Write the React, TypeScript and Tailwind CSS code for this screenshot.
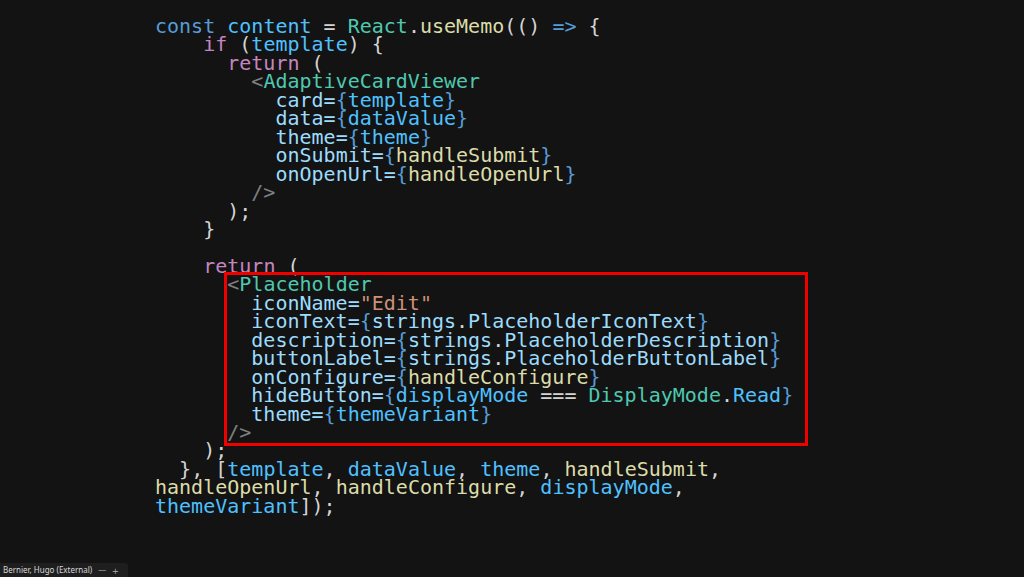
import React from "react";

type Tok = [string, string];

const C: Record<string, string> = {
  kw: "text-[#569cd6]",
  ctl: "text-[#c586c0]",
  v: "text-[#4fc1ff]",
  p: "text-[#9cdcfe]",
  fn: "text-[#dcdcaa]",
  ty: "text-[#4ec9b0]",
  s: "text-[#ce9178]",
  pu: "text-[#d4d4d4]",
  tg: "text-[#808080]",
  br: "text-[#569cd6]",
};

const lines: Tok[][] = [
  [["const", "kw"], [" ", "pu"], ["content", "v"], [" = ", "pu"], ["React", "ty"], [".", "pu"], ["useMemo", "fn"], ["(() ", "pu"], ["=>", "kw"], [" {", "pu"]],
  [["    ", "pu"], ["if", "ctl"], [" (", "pu"], ["template", "v"], [") {", "pu"]],
  [["      ", "pu"], ["return", "ctl"], [" (", "pu"]],
  [["        ", "pu"], ["<", "tg"], ["AdaptiveCardViewer", "ty"]],
  [["          ", "pu"], ["card=", "p"], ["{", "br"], ["template", "v"], ["}", "br"]],
  [["          ", "pu"], ["data=", "p"], ["{", "br"], ["dataValue", "v"], ["}", "br"]],
  [["          ", "pu"], ["theme=", "p"], ["{", "br"], ["theme", "v"], ["}", "br"]],
  [["          ", "pu"], ["onSubmit=", "p"], ["{", "br"], ["handleSubmit", "fn"], ["}", "br"]],
  [["          ", "pu"], ["onOpenUrl=", "p"], ["{", "br"], ["handleOpenUrl", "fn"], ["}", "br"]],
  [["        ", "pu"], ["/>", "tg"]],
  [["      ", "pu"], [");", "pu"]],
  [["    ", "pu"], ["}", "pu"]],
  [[" ", "pu"]],
  [["    ", "pu"], ["return", "ctl"], [" (", "pu"]],
  [["      ", "pu"], ["<", "tg"], ["Placeholder", "ty"]],
  [["        ", "pu"], ["iconName=", "p"], ["\"Edit\"", "s"]],
  [["        ", "pu"], ["iconText=", "p"], ["{", "br"], ["strings", "p"], [".", "pu"], ["PlaceholderIconText", "p"], ["}", "br"]],
  [["        ", "pu"], ["description=", "p"], ["{", "br"], ["strings", "p"], [".", "pu"], ["PlaceholderDescription", "p"], ["}", "br"]],
  [["        ", "pu"], ["buttonLabel=", "p"], ["{", "br"], ["strings", "p"], [".", "pu"], ["PlaceholderButtonLabel", "p"], ["}", "br"]],
  [["        ", "pu"], ["onConfigure=", "p"], ["{", "br"], ["handleConfigure", "fn"], ["}", "br"]],
  [["        ", "pu"], ["hideButton=", "p"], ["{", "br"], ["displayMode", "v"], [" === ", "pu"], ["DisplayMode", "ty"], [".", "pu"], ["Read", "v"], ["}", "br"]],
  [["        ", "pu"], ["theme=", "p"], ["{", "br"], ["themeVariant", "v"], ["}", "br"]],
  [["      ", "pu"], ["/>", "tg"]],
  [["    ", "pu"], [");", "pu"]],
  [["  ", "pu"], ["}, [", "pu"], ["template", "v"], [", ", "pu"], ["dataValue", "v"], [", ", "pu"], ["theme", "v"], [", ", "pu"], ["handleSubmit", "fn"], [",", "pu"]],
  [["handleOpenUrl", "fn"], [", ", "pu"], ["handleConfigure", "fn"], [", ", "pu"], ["displayMode", "v"], [",", "pu"]],
  [["themeVariant", "v"], ["]);", "pu"]],
];

export default function App() {
  return (
    <div className="relative flex h-[577px] w-[1024px] flex-col overflow-hidden bg-[#131313]">
      <div
        className="pl-[155px] pt-[17px] text-[20px] leading-[18.46px] whitespace-pre"
        style={{ fontFamily: '"DejaVu Sans Mono", "Liberation Mono", monospace' }}
      >
        {lines.map((ln, i) => (
          <div key={i} className="h-[18.46px]">
            {ln.map((t, j) => (
              <span key={j} className={C[t[1]]}>
                {t[0]}
              </span>
            ))}
          </div>
        ))}
      </div>
      <div className="pointer-events-none absolute left-[224px] top-[272px] h-[174px] w-[584px] border-[3px] border-[#f20000]" />
      <div className="mt-auto flex h-[14px] w-[128px] items-center gap-[6px] rounded-tr-[3px] bg-[#1e1e1e] pl-[3px] text-[8px] text-[#d8d8d8]" style={{ fontFamily: '"Noto Sans", "Liberation Sans", sans-serif' }}>
        <span className="whitespace-nowrap">Bernier, Hugo (External)</span>
        <span className="text-[#9a9a9a]">—</span>
        <span className="text-[11px] leading-none text-[#9a9a9a]">+</span>
      </div>
    </div>
  );
}
